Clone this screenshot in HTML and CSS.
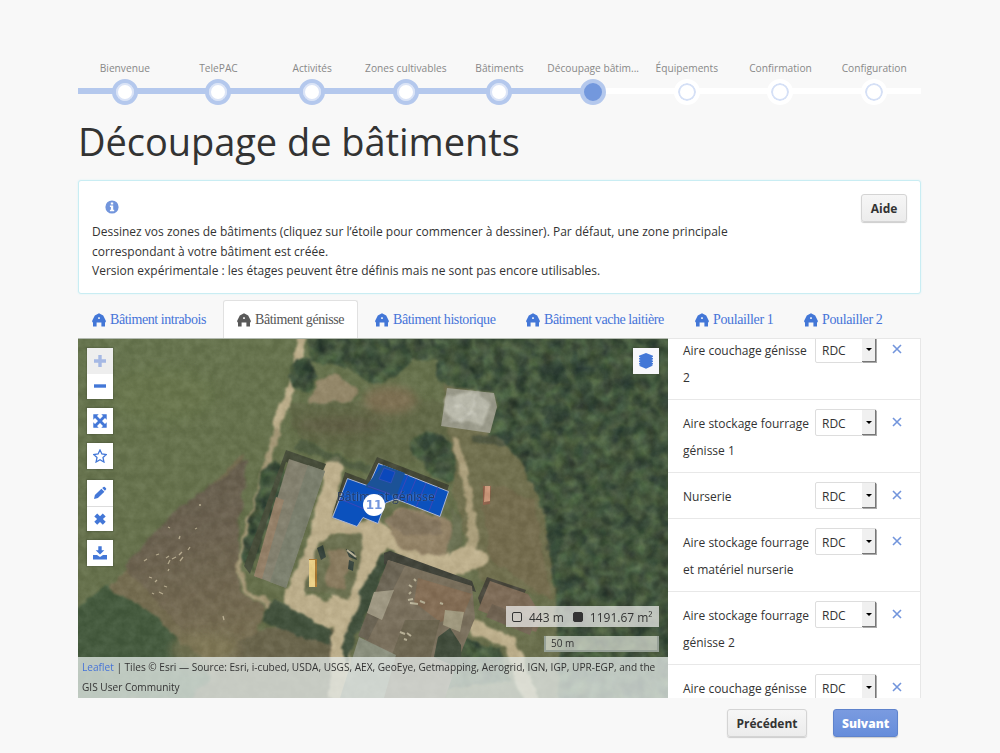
FILE: index.html
```html
<!DOCTYPE html>
<html lang="fr">
<head>
<meta charset="utf-8">
<title>Découpage de bâtiments</title>
<link rel="stylesheet" href="styles.css">
</head>
<body>
<svg class="defs" width="0" height="0">
  <symbol id="barn" viewBox="0 0 14 14"><path fill-rule="evenodd" d="M7 0.3 11.2 2.6 13.8 7.8V9.2H13V13.4H9.4V9.6H4.600V13.4H1V9.2H.2V7.8L2.8 2.6ZM6.200 4.2V6H7.800V4.2Z"/></symbol>
</svg>
<main class="page">
  <ol class="steps">
    <li class="step done"><span class="label">Bienvenue</span><i class="dot"></i></li>
    <li class="step done"><span class="label">TelePAC</span><i class="dot"></i></li>
    <li class="step done"><span class="label">Activités</span><i class="dot"></i></li>
    <li class="step done"><span class="label">Zones cultivables</span><i class="dot"></i></li>
    <li class="step done"><span class="label">Bâtiments</span><i class="dot"></i></li>
    <li class="step current"><span class="label">Découpage bâtim...</span><i class="dot"></i></li>
    <li class="step"><span class="label">Équipements</span><i class="dot"></i></li>
    <li class="step"><span class="label">Confirmation</span><i class="dot"></i></li>
    <li class="step"><span class="label">Configuration</span><i class="dot"></i></li>
  </ol>
  <h1 class="title">Découpage de bâtiments</h1>
  <section class="info">
    <div class="info-text">
      <svg class="info-icon" viewBox="0 0 14 14"><circle cx="7" cy="7" r="6.6" fill="#7295dc"/><path d="M5.8 2.4h2.4v2H5.8zM4.9 5.6h3.3v4.2h1v1.5H4.9V9.8h1V7.1h-1z" fill="#fff"/></svg>
      <p>Dessinez vos zones de bâtiments (cliquez sur l’étoile pour commencer à dessiner). Par défaut, une zone principale<br>correspondant à votre bâtiment est créée.<br>Version expérimentale : les étages peuvent être définis mais ne sont pas encore utilisables.</p>
    </div>
    <button class="btn help">Aide</button>
  </section>
  <nav class="tabs">
    <a class="tab t1"><svg class="barn"><use href="#barn"/></svg>Bâtiment intrabois</a>
    <a class="tab active"><svg class="barn"><use href="#barn"/></svg>Bâtiment génisse</a>
    <a class="tab t3"><svg class="barn"><use href="#barn"/></svg>Bâtiment historique</a>
    <a class="tab t4"><svg class="barn"><use href="#barn"/></svg>Bâtiment vache laitière</a>
    <a class="tab t5"><svg class="barn"><use href="#barn"/></svg>Poulailler 1</a>
    <a class="tab t6"><svg class="barn"><use href="#barn"/></svg>Poulailler 2</a>
  </nav>
  <div class="work">
    <div class="map">
      <svg class="aerial" viewBox="78 338 590 360" preserveAspectRatio="none" color-interpolation-filters="sRGB">
        <defs>
          <filter id="canopy" x="0" y="0" width="100%" height="100%">
            <feTurbulence type="fractalNoise" baseFrequency="0.085" numOctaves="3" seed="8" result="n"/>
            <feColorMatrix in="n" values="0.06 0.3 0 0 0.07  0 0.36 0 0 0.145  0 0.2 0.06 0 0.1  0 0 0 0 1"/>
            <feComposite in2="SourceGraphic" operator="in"/>
          </filter>
          <filter id="rough" x="-5%" y="-5%" width="110%" height="110%">
            <feTurbulence type="fractalNoise" baseFrequency="0.07" numOctaves="3" seed="4"/>
            <feDisplacementMap in="SourceGraphic" scale="10" xChannelSelector="R" yChannelSelector="G"/>
            <feGaussianBlur stdDeviation="0.8"/>
          </filter>
          <filter id="soft" x="-40%" y="-40%" width="180%" height="180%"><feGaussianBlur stdDeviation="5"/></filter>
          <filter id="edge"><feGaussianBlur stdDeviation="0.7"/></filter>
          <filter id="grain" x="0" y="0" width="100%" height="100%">
            <feTurbulence type="fractalNoise" baseFrequency="0.11" numOctaves="4" seed="21"/>
            <feColorMatrix values="0 1.8 0 0 -.45 0 1.8 0 0 -.45 0 1.8 0 0 -.5 0 0 0 0 .06"/>
          </filter>
          <linearGradient id="meadow" x1="0" y1="0" x2="1" y2="1"><stop offset="0" stop-color="#66754e"/><stop offset=".5" stop-color="#66704b"/><stop offset="1" stop-color="#6e704e"/></linearGradient>
          <linearGradient id="plough" x1=".4" y1="0" x2=".6" y2="1"><stop offset="0" stop-color="#675e4e"/><stop offset=".4" stop-color="#6c614f"/><stop offset="1" stop-color="#797052"/></linearGradient>
        </defs>
        <rect x="78" y="338" width="590" height="360" fill="url(#meadow)"/>
        <g filter="url(#rough)">
          <path d="M245 452 208 553 230 600 275 650 300 700H110V585Z" fill="#756d50"/>
          <path d="M246 460 172 514 124 567 146 588 182 632 208 660 250 640 268 610 240 590 236 560Z" fill="url(#plough)"/>
          <path d="M70 612 106 586 150 612 180 640 208 662 210 700H70Z" fill="#435a3d"/>
          <path d="M290 620 345 633 345 700H190L240 640Z" fill="#6b654c"/>
          <path d="M286 402 440 400 470 470 440 460 380 465 300 440Z" fill="#626a48"/>
          <path d="M440 350 475 400 520 430 545 520 560 600 480 580 455 500Z" fill="#71704e"/>
          <path d="M480 480 535 500 550 600 490 560Z" fill="#756d4e"/>
        </g>
        <g filter="url(#soft)">
          <ellipse cx="390" cy="400" rx="27" ry="14" fill="#7f7153"/>
          <ellipse cx="340" cy="425" rx="45" ry="10" fill="#605f44"/>
          <ellipse cx="160" cy="395" rx="55" ry="28" fill="#6b784b" opacity=".5"/>
          <ellipse cx="205" cy="650" rx="35" ry="18" fill="#837a58" opacity=".7"/>
        </g>
        <!-- tracks and farmyard -->
        <g filter="url(#rough)" fill="none" stroke="#c2b38f" stroke-linejoin="round" stroke-linecap="round">
          <path d="M303 335 292 383 276 432" stroke-width="7"/>
          <path d="M276 432 263 480 246 535 237 567 248 592 276 610" stroke-width="6" stroke="#a79a78"/>
          <path d="M455 440 463 470 470 505 473 540 460 565" stroke-width="8" stroke="#aea17d"/>
          <path d="M334 466 326 510 312 555 292 598 334 612 352 560 370 525 400 545 445 570 480 557" stroke-width="18"/>
          <path d="M350 525 374 548 355 590 340 640 340 700" stroke-width="20"/>
          <path d="M292 600 330 620" stroke-width="18"/>
          <path d="M328 528 375 530 382 545" stroke-width="12"/>
          <path d="M400 515 430 525" stroke-width="10"/>
          <path d="M440 562 470 552" stroke-width="14"/>
          <path d="M475 628 510 642 530 700" stroke-width="13"/>
          <path d="M308 400 322 403 348 400 355 390 338 378 322 380Z" stroke-width="4" fill="#95886a" stroke="#95886a"/>
        </g>
        <g filter="url(#rough)">
          <path d="M318 542 332 533 360 535 362 552 350 600 305 590Z" fill="#6c7150"/>
          <path d="M330 550 344 548 350 560 345 590 325 586Z" fill="#8d7e61"/>
          <path d="M386 518 398 508 446 518 456 540 440 558 398 546Z" fill="#958468"/>
          <path d="M386 518 402 509 440 522 442 535 404 534Z" fill="#85765f"/>
          <path d="M450 506 462 520 462 545 448 555 452 530Z" fill="#6c7253"/>
          <path d="M383 552 394 552 364 618 346 664 342 648 362 592Z" fill="#3f4f3b"/>
          <path d="M275 598 330 630 330 644 296 636 262 620Z" fill="#40503b"/>
        </g>
        <!-- woodland -->
        <g filter="url(#rough)"><g filter="url(#canopy)">
          <path d="M306 330H680V710H560L556 600 550 565 548 530 540 500 520 460 496 436 490 434 497 407 494 392 447 388 440 380 438 362 412 358 398 376 380 386 346 368 330 364 310 362Z"/>
          <path d="M410 450 412 437 425 431 440 434 450 445 456 470 450 484 430 474Z"/>
          <ellipse cx="302" cy="376" rx="14" ry="17"/>
          <path d="M264 468 276 460 286 473 253 572 240 556Z"/>
          <path d="M435 640 460 635 500 650 510 680 440 690Z"/>
        </g></g>
        <g filter="url(#rough)" fill="#21352f" opacity=".4">
          <path d="M575 350 588 380 600 405 588 410 570 365ZM617 380 632 374 628 400 612 397ZM540 410 560 400 570 415 550 425ZM608 430 640 425 626 440ZM470 435 515 432 505 446 474 444ZM550 525 565 535 555 565 545 545ZM655 435 668 450 650 455ZM553 575 574 585 560 597ZM412 440 428 433 440 437 425 450ZM530 370 560 360 570 385 545 382ZM645 480 668 475 668 490ZM290 366 304 362 312 372 300 380Z"/>
        </g>
        <path d="M300 438 340 456 372 464 368 474 340 464 296 450Z" fill="#46553c" opacity=".7" filter="url(#rough)"/>
        <!-- buildings -->
        <g filter="url(#edge)">
          <path d="M286 450 326 464 322 473 286 462 250 574 244 566Z" fill="#454b38"/>
          <path d="M289 459 325 471 286 588 254 576Z" fill="#858270"/>
          <path d="M308 465 325 471 286 588 270 582Z" fill="#7c806e"/>
          <path d="M276 497 284 500 262 579 254 576Z" fill="#968169"/>
          <path d="M345 472 366 480 377 457 449 485 447 492 378 465 369 487 348 480 332 516Z" fill="#414533"/>
          <path d="M384 553 390 551 472 581 476 592 384 564Z" fill="#3f4138"/>
          <path d="M388 560 472 586 475 618 458 660 445 698H348Z" fill="#7b705d"/>
          <path d="M388 560 405 566 368 640 358 636Z" fill="#6c6454"/>
          <path d="M418 578 472 594 463 616 440 622 414 602Z" fill="#846d54"/>
          <path d="M405 620 440 620 430 660 390 660Z" fill="#6d6550"/>
          <path d="M359 637 396 655 384 698H340Z" fill="#8d9280"/>
          <path d="M374 592 394 590 382 620 367 613Z" fill="#a29b85"/>
          <path d="M445 610 464 612 460 632 443 625Z" fill="#a29b80"/>
          <path d="M438 637 450 628 461 645 462 670 434 657Z" fill="#3f4b3a"/>
          <path d="M487 577 526 590 519 607 482 610 478 598Z" fill="#47453a"/>
          <path d="M490 581 528 594 543 618 536 632 478 610Z" fill="#7e6b57"/>
          <path d="M492 604 535 620 530 635 486 617Z" fill="#716352"/>
          <path d="M447 388 494 393 497 407 490 433 441 426Z" fill="#9c9c8c"/>
          <path d="M447 397 480 391 490 407 483 426 452 420 444 410Z" fill="#bcbcae" filter="url(#rough)"/>
          <path d="m450 422 20-8 6-20m-26 16 14-6 10 14" fill="none" stroke="#dadacf" filter="url(#rough)"/>
          <path d="m483 486 8 0-1 18-7 1z" fill="#8f604a"/><path d="m485 486 5 0 0 15-6 1z" fill="#d09a7c"/>
          <path d="M309 559h8v28h-8z" fill="#ad7a30"/><path d="M309 560h6v27h-6z" fill="#f0d488"/>
          <path d="m317 548 6-3 3 12-5 3zM346 549l8 3 3 8-8-3zM349 560l5 2-1 9-5-2z" fill="#34413a"/>
          <path d="m347 550 9 7M408 600l5-1m-3 4 8 1m2-3 5 2m-16-18 3 2m2-8 2 2m24 22 3 1m-34-10 2-2m-11 40 5 2m2-1 4 3m-7 3 3 1" fill="none" stroke="#bdb59b" stroke-width="2"/>
        </g>
        <path d="m166 558 3-2m-1 8 2-4m2-1 4-2m-8 14 1-2m10-14 3-3m-2 9 3-4m5-7 2-3m-35 35 2-2m-5 13 2 1m10-8 3 1m-8 5 4 2m60 22 1 4m-29-91 2-1m-29-1 2 1m29-23 2 0m-22 34 1-3m-24 19 3-1m-15 7 3-2m2 18 3 1" stroke="#b9ad90" stroke-width="1.300"/>
        <rect x="78" y="338" width="590" height="360" filter="url(#grain)"/>
        <g stroke="#aab5d4" stroke-width="1" fill="#0b51bd">
          <path d="M378.500 463.500 448.500 491.500 440 516.500 396 499 385.500 503 378 523.500 363 517.500 357 526.500 332.500 517.500 347.500 478.500 368.500 486Z"/>
          <path d="M383 465 405 473 396 497 365 487Z" fill="#1b5297" stroke="none"/>
          <path d="m384 468 11 4-4 11-12-4z" fill="#0b48bb" stroke="#3051b7"/>
          <path d="m408 475-10 24m18-20-10 24m20-20-10 24m22-20-9 24M368 486l22 8M340 499l29 12" fill="none" stroke="#3c46b9"/>
        </g>
      </svg>
      <span class="zone-name">Bâtiment génisse</span>
      <span class="cluster">11</span>
      <div class="controls">
        <div class="group g1"><b class="off"><svg viewBox="0 0 14 14"><path d="M5.300 1h3.400v4.300H13v3.400H8.700V13H5.300V8.700H1V5.300h4.300z"/></svg></b><b><svg viewBox="0 0 14 14"><path d="M1 5.300h12v3.400H1z"/></svg></b></div>
        <div class="group g2"><b><svg viewBox="0 0 14 14"><path d="M.3.300h5.400L4 2l3 3 3-3L8.300.3h5.400v5.400L12 4 9 7l3 3 1.700-1.700v5.400H8.300L10 12 7 9l-3 3 1.700 1.700H.3V8.300L2 10l3-3-3-3L.3 5.700z"/></svg></b></div>
        <div class="group g3"><b><svg viewBox="0 0 14 14"><path d="m7 1 1.900 4 4.400.5-3.300 3 .9 4.500L7 10.800 3.100 13 4 8.500.7 5.500 5.100 5z" fill="none" stroke="#4377d7" stroke-width="1.300"/></svg></b></div>
        <div class="group g4"><b><svg viewBox="0 0 14 14"><path d="m1 13 .9-3.900 6.500-6.300 3 3-6.500 6.300zM9.200 2.100l1.300-1.200q.7-.5 1.300.1L13 2.200q.6.700 0 1.300l-1.100 1.300z"/></svg></b><b><svg viewBox="0 0 14 14"><path d="M4.200 1.500 7 4.300l2.800-2.800 2.900 2.900L9.900 7l2.800 2.800-2.900 2.900L7 9.900l-2.800 2.800-2.900-2.900L4.100 7 1.300 4.400z"/></svg></b></div>
        <div class="group g5"><b><svg viewBox="0 0 14 14"><path d="M5.300.3h3.400v4h2.600L7 8.600 2.700 4.300h2.600zM0 9h4l3 2 3-2h4v4.500H0z"/></svg></b></div>
      </div>
      <div class="layers"><svg viewBox="0 0 16 16"><path d="m8 0 7 2.700v1.100l-1.500.7 1.500.7v1.100l-1.500.7 1.500.7v1.100l-1.500.7 1.500.7v1.100l-1.500.7 1.500.6L8 15.700 1 12.700l1.500-.7L1 11.300v-1.100l1.500-.7L1 8.800V7.700L2.500 7 1 6.300V5.200l1.500-.7L1 3.800V2.700z"/></svg></div>
      <div class="measure"><i class="box"></i><span class="m1">443 m</span><i class="box full"></i><span>1191.67 m²</span></div>
      <div class="scale">50 m</div>
      <div class="credit"><a>Leaflet</a> | Tiles © Esri — Source: Esri, i-cubed, USDA, USGS, AEX, GeoEye, Getmapping, Aerogrid, IGN, IGP, UPR-EGP, and the<br>GIS User Community</div>
    </div>
    <div class="zones">
      <div class="zone"><span class="name">Aire couchage génisse<br>2</span><span class="select">RDC<i></i></span><svg class="del" viewBox="0 0 10 10"><path d="m1 1 8 8M9 1 1 9"/></svg></div>
      <div class="zone"><span class="name">Aire stockage fourrage<br>génisse 1</span><span class="select">RDC<i></i></span><svg class="del" viewBox="0 0 10 10"><path d="m1 1 8 8M9 1 1 9"/></svg></div>
      <div class="zone"><span class="name">Nurserie</span><span class="select">RDC<i></i></span><svg class="del" viewBox="0 0 10 10"><path d="m1 1 8 8M9 1 1 9"/></svg></div>
      <div class="zone"><span class="name">Aire stockage fourrage<br>et matériel nurserie</span><span class="select">RDC<i></i></span><svg class="del" viewBox="0 0 10 10"><path d="m1 1 8 8M9 1 1 9"/></svg></div>
      <div class="zone"><span class="name">Aire stockage fourrage<br>génisse 2</span><span class="select">RDC<i></i></span><svg class="del" viewBox="0 0 10 10"><path d="m1 1 8 8M9 1 1 9"/></svg></div>
      <div class="zone"><span class="name">Aire couchage génisse</span><span class="select">RDC<i></i></span><svg class="del" viewBox="0 0 10 10"><path d="m1 1 8 8M9 1 1 9"/></svg></div>
    </div>
  </div>
  <footer class="actions"><button class="btn prev">Précédent</button><button class="btn primary">Suivant</button></footer>
</main>
</body>
</html>
```
FILE: styles.css
```css
* { box-sizing: border-box; }
body { margin: 0; height: 753px; overflow: hidden; background: #f8f8f8; color: #333; font-family: "Open Sans", sans-serif; font-size: 12px; }
.defs { display: block; position: absolute; }
.page { width: 843px; margin-left: 78px; padding-top: 60px; }

.steps { display: grid; grid-template-columns: repeat(9, 1fr); list-style: none; margin: 0; padding: 0; height: 46px; }
.step { display: flex; flex-direction: column; align-items: center; background: linear-gradient(#fff, #fff) 0 28px / 100% 6px no-repeat; }
.step.done { background-image: linear-gradient(#b4c8ed, #b4c8ed); }
.step.current { background-image: linear-gradient(90deg, #b4c8ed 50%, #fff 50%); }
.label { height: 18.500px; line-height: 17px; font-size: 10.200px; color: #888; white-space: nowrap; }
.dot { display: block; width: 26px; height: 26px; border-radius: 50%; border: 4px solid #fff; background: #fff; box-shadow: inset 0 0 0 2px #d5e0f6; }
.done .dot { border-color: #b4c8ed; box-shadow: inset 0 0 0 2px #dbe4f7; }
.current .dot { border-color: #b4c8ed; background: #7398dd; box-shadow: none; }

.title { margin: 6px 0 0; height: 68px; line-height: 59px; font-size: 38px; letter-spacing: -.05px; font-weight: 400; white-space: nowrap; }

.info { display: flex; justify-content: space-between; align-items: flex-start; height: 114px; padding: 13px 13px 0 13px; background: #fff; border: 1px solid #c9edf3; border-radius: 3px; box-shadow: 0 0 2px #d5f1f6; }
.info-text { white-space: nowrap; }
.info-icon { display: block; width: 14px; height: 14px; margin: 6px 0 8px 13px; }
.info p { margin: 0; line-height: 19.500px; font-size: 12px; letter-spacing: .01px; }
.btn { height: 28px; padding: 0 8px; font: 700 12px "Open Sans", sans-serif; color: #333; background: linear-gradient(#f6f6f6, #ececec); border: 1px solid #d4d4d4; border-radius: 3px; box-shadow: 0 1px 1px #ccc; }
.help { width: 46px; }

.tabs { display: flex; height: 38px; margin-top: 6px; }
.tab { display: flex; align-items: center; height: 38px; padding: 0 14px 0; border: 1px solid transparent; border-width: 1px 1px 0; border-radius: 3px 3px 0 0; font: 14px "Liberation Serif", serif; letter-spacing: -.44px; color: #4674d8; fill: #4377d7; white-space: nowrap; }
.tab.active { width: 135px; padding-left: 13px; background: #fff; border-color: #e1e1e1; color: #555; fill: #595959; }
.barn { width: 14px; height: 14px; margin-right: 4px; flex: none; }
.t1 { width: 145px; padding-left: 13px; }
.t3 { width: 153px; padding-left: 16px; }
.t4 { width: 169px; }
.t5 { width: 109px; }
.t5, .t6 { letter-spacing: -.37px; }

.work { display: flex; height: 360px; }
.map { position: relative; width: 590px; height: 360px; overflow: hidden; background: #62714a; border-top: 1px solid #b3bab0; }
.aerial { display: block; width: 590px; height: 360px; margin-top: -1px; }
.zone-name { position: absolute; left: 259px; top: 149px; font-size: 12px; letter-spacing: .1px; line-height: 18px; color: #26375c; text-shadow: -1px 0 1px rgba(255, 255, 255, .25), 1px 0 1px rgba(255, 255, 255, .15); white-space: nowrap; opacity: .85; }
.cluster { position: absolute; left: 285px; top: 155px; width: 22px; height: 22px; border-radius: 50%; background: #fff; color: #7295dc; font: 700 12px/22px "DejaVu Sans", sans-serif; text-align: center; }
.controls { position: absolute; left: 9px; top: 9px; width: 26px; fill: #4377d7; }
.group { background: #fff; box-shadow: 0 0 1px 1px rgba(50, 60, 35, .22); }
.group b { display: flex; align-items: center; justify-content: center; height: 26px; padding: 0 1px 0 0; }
.group b + b { height: 25px; border-top: 1px solid #ddd; }
.group svg { width: 14px; height: 14px; }
.group .off { background: #eee; fill: #a5b8e4; padding-bottom: 1px; }
.group .off + b { border-top: 0; padding-bottom: 2px; }
.g2, .g3 { margin-top: 9px; }
.g4 { margin-top: 11px; }
.g5 { margin-top: 9px; }
.layers { position: absolute; left: 555px; top: 9px; width: 26px; height: 26px; padding: 5px; background: #f7f7fb; fill: #4377d7; box-shadow: 0 0 1px 1px rgba(50, 60, 35, .22); }
.layers svg { display: block; width: 16px; height: 16px; }
.measure { position: absolute; left: 428px; top: 267px; width: 153px; height: 21px; display: flex; align-items: center; padding: 1px 0 0 6px; background: rgba(240, 240, 238, .72); font-size: 12px; white-space: nowrap; }
.box { width: 10px; height: 10px; border: 1px solid #333; border-radius: 2px; margin-right: 7px; }
.box.full { background: #333; }
.m1 { margin-right: 9px; }
.scale { position: absolute; left: 466px; top: 297px; width: 115px; height: 16px; padding-left: 5px; border: 2px solid #96a096; border-top: 0; background: rgba(235, 238, 230, .65); font-size: 10px; line-height: 15px; }
.credit { position: absolute; left: 0; bottom: 0; width: 590px; height: 41px; padding-left: 4px; background: rgba(228, 234, 232, .77); font-size: 10.110px; line-height: 20px; white-space: nowrap; }
.credit a { color: #4674d8; }

.zones { width: 253px; height: 360px; overflow: hidden; background: #fff; border: solid #e7e7e7; border-width: 1px 1px 0 0; }
.zone { display: grid; grid-template-columns: 132px 62px 11px; align-items: start; height: 73px; padding: 10px 0 0 15px; border-bottom: 1px solid #e8e8e8; line-height: 27px; font-size: 12px; }
.zone:nth-child(3) { height: 46px; }
.zone:first-child { margin-top: -12px; }
.name { white-space: nowrap; }
.select { position: relative; display: block; height: 27px; margin-top: -1px; padding-left: 6px; border: 1px solid #ddd; border-radius: 2px; line-height: 27px; }
.select i { position: absolute; right: 0; top: 0; width: 14px; height: 25px; background: #f0f0f0; border-right: 1px solid #777; border-bottom: 1px solid #777; box-shadow: 1px 1px 0 #aaa; }
.select i::after { content: ""; position: absolute; left: 4px; top: 11px; border: 3px solid transparent; border-top: 3px solid #000; border-bottom: 0; }
.del { width: 10px; height: 10px; margin: 7px 0 0 15px; fill: none; stroke: #7295dc; stroke-width: 1.600; }

.actions { display: flex; justify-content: flex-end; padding: 11px 23px 0 0; gap: 26px; }
.prev { width: 80px; }
.primary { width: 65px; color: #fff; font-weight: 800; background: linear-gradient(#7a9be0, #668ddb); border-color: #5f83cc; }
```
